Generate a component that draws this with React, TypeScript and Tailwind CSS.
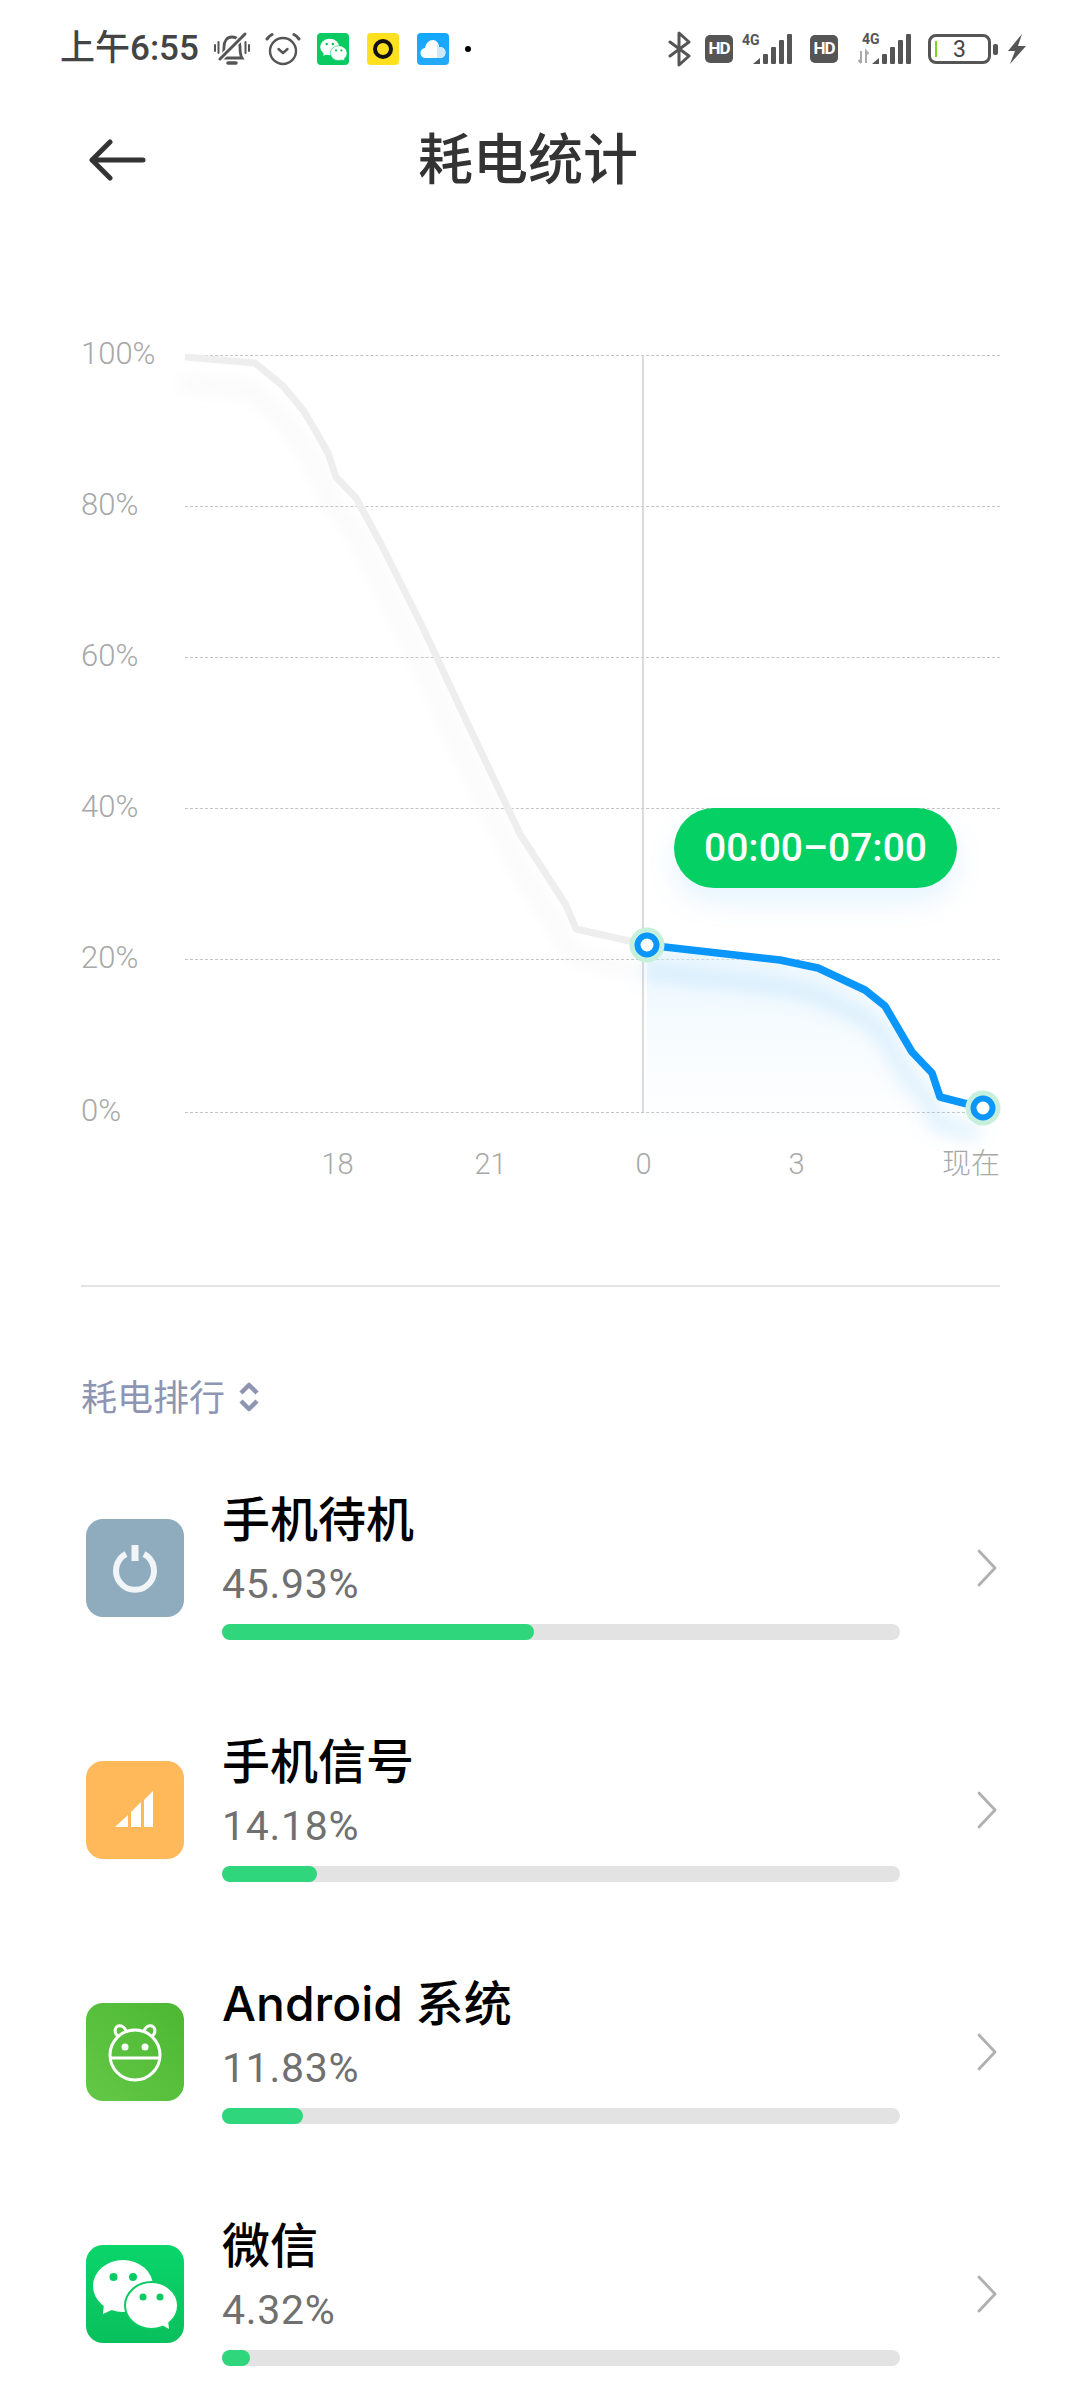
const BLUE_LINE = "647,945 780,960 818,968 865,990 885,1006 912,1052 932,1073 940,1097 983,1108";
const GRAY_LINE =
  "185,357 255,363 283,386 303,410 315,430 328,453 336,477 356,498 380,542 424,630 465,718 520,834 566,905 576,929 647,945";

const BellOff = () => (
  <svg width="36" height="36" viewBox="0 0 36 36" fill="none" stroke="#555" strokeWidth="2.800" strokeLinecap="round">
    <path d="M8 27c2-3 2-7 2-11 0-6 3-10 8-10s8 4 8 10c0 4 0 8 2 11z" />
    <path d="M14 32h8" strokeWidth="3.500" />
    <path d="M6 28 31 3" stroke="#fff" strokeWidth="6" />
    <path d="M6 28 31 3" strokeWidth="3" />
    <path d="M1 14v6M4.500 11v11M31.500 11v11M35 14v6" strokeWidth="2" />
  </svg>
);

const AlarmIcon = () => (
  <svg width="36" height="36" viewBox="0 0 36 36" fill="none" stroke="#555" strokeWidth="2.400" strokeLinecap="round" strokeLinejoin="round">
    <circle cx="18" cy="20" r="13" />
    <path d="m13.500 18 4.500 4 4.500-4" />
    <path d="M2 8c1.500-2 3-3.500 5-4.500M34 8c-1.500-2-3-3.500-5-4.500" strokeWidth="3" />
  </svg>
);

const Bubbles = ({ size }: { size: number }) => (
  <svg width={size} height={size} viewBox="0 0 98 98">
    <ellipse cx="37" cy="41" rx="30" ry="26" fill="#fff" />
    <path d="M18 58 17 69l13-6z" fill="#fff" />
    <ellipse cx="65.500" cy="60.500" rx="26.500" ry="23.500" fill="#fff" stroke="#0acb62" strokeWidth="2" />
    <path d="M76 80 83 84l-1-9z" fill="#fff" />
    <circle cx="27.500" cy="32" r="4" fill="#0acb62" />
    <circle cx="47" cy="32" r="4" fill="#0acb62" />
    <circle cx="57" cy="52" r="3.500" fill="#0acb62" />
    <circle cx="74" cy="52" r="3.500" fill="#0acb62" />
  </svg>
);

const CloudBadge = () => (
  <div className="w-8 h-8 rounded-[4px] bg-gradient-to-b from-[#12a7ff] to-[#25a9f5] flex items-center justify-center">
    <svg width="28" height="22" viewBox="0 0 28 22">
      <path d="M7 20a5 5 0 0 1-1-10c1-5 4-8 8-8 3 0 6 3 6 7h1a5.500 5.500 0 0 1 0 11z" fill="#fff" />
      <path d="M18 6c1 1 2 2 2 3h1a5.500 5.500 0 0 1 0 11h-3z" fill="#cfe9fb" />
    </svg>
  </div>
);

const Bars = () => (
  <g fill="#555">
    <path d="M0 30 7 24v6z" />
    <rect x="10" y="20" width="5" height="10" rx="1" />
    <rect x="18" y="13" width="5" height="17" rx="1" />
    <rect x="26" y="6" width="5" height="24" rx="1" />
    <rect x="34" y="0" width="5" height="30" rx="1" />
  </g>
);

const HdBadge = () => (
  <div className="w-7 h-7 rounded-[5px] bg-[#555] flex items-center justify-center text-white text-[17px] font-bold tracking-[-1px] font-['Roboto',sans-serif]">
    HD
  </div>
);

const StatusBar = () => (
  <div className="h-[98px] relative flex items-center pl-[60px] pr-[53px]">
    <span className="w-[154px] text-[35px] font-medium text-[#444] font-['Roboto','Noto_Sans_CJK_SC',sans-serif] whitespace-nowrap">
      上午6:55
    </span>
    <BellOff />
    <div className="ml-[15px]">
      <AlarmIcon />
    </div>
    <div className="ml-4 w-8 h-8 rounded-[4px] bg-[#0acb62] flex items-center justify-center">
      <Bubbles size={31} />
    </div>
    <div className="ml-[18px] w-8 h-8 rounded-[4px] bg-[#ffe01f] flex items-center justify-center">
      <div className="w-5 h-5 rounded-full border-[4px] border-[#111]" />
    </div>
    <div className="ml-[18px]">
      <CloudBadge />
    </div>
    <div className="ml-4 w-[6px] h-[6px] rounded-full bg-black" />

    <div className="ml-auto flex items-center">
      <svg width="24" height="36" viewBox="0 0 24 36" fill="none" stroke="#555" strokeWidth="3" strokeLinecap="round" strokeLinejoin="round">
        <path d="M2 11 21 25l-10 9V2l10 9L2 25" />
      </svg>
      <div className="ml-[13px]">
        <HdBadge />
      </div>
      <div className="ml-[9px] relative w-[52px] h-[32px]">
        <span className="absolute left-0 -top-[3px] text-[14px] font-bold text-[#555] font-['Roboto',sans-serif]">4G</span>
        <svg width="52" height="32" viewBox="0 0 52 32">
          <g transform="translate(11 1)">
            <Bars />
          </g>
        </svg>
      </div>
      <div className="ml-[16px]">
        <HdBadge />
      </div>
      <div className="ml-[18px] relative w-[56px] h-[32px]">
        <span className="absolute left-[6px] -top-[4px] text-[14px] font-bold text-[#555] font-['Roboto',sans-serif]">4G</span>
        <svg width="56" height="32" viewBox="0 0 56 32">
          <path d="M5 18v12M2.500 27 5 30M10 30V18l2.500 3" stroke="#aaa" strokeWidth="2" fill="none" />
          <g transform="translate(16 1)">
            <Bars />
          </g>
        </svg>
      </div>
      <div className="ml-[16px] w-[63px] h-[30px] rounded-[8px] border-[3px] border-[#555] flex items-center relative">
        <div className="absolute left-[4px] w-[2px] h-[16px] bg-[#7ed321]" />
        <span className="w-full text-center text-[23px] leading-none text-[#444] font-['Roboto',sans-serif]">3</span>
      </div>
      <div className="ml-[2px] w-[5px] h-[11px] rounded-[2px] bg-[#555]" />
      <svg className="ml-[9px]" width="20" height="30" viewBox="0 0 20 30">
        <path d="M15 0 1 17h7l-5 13 16-18h-8z" fill="#555" />
      </svg>
    </div>
  </div>
);

const Header = () => (
  <div className="h-[124px] flex items-center pl-[88px]">
    <svg width="58" height="42" viewBox="0 0 58 42" fill="none" stroke="#333" strokeWidth="5" strokeLinecap="round" strokeLinejoin="round">
      <path d="M22 3 4 21l18 18M4 21h51" />
    </svg>
    <h1 className="ml-[272px] -mt-[9px] text-[55px] font-medium leading-none text-[#333] font-['Noto_Sans_CJK_SC',sans-serif]">
      耗电统计
    </h1>
  </div>
);

const Chart = () => (
  <div className="relative mt-[113px]">
    <div className="flex flex-col gap-[111px] pl-[81px] pr-[80px]">
      {["100%", "80%", "60%", "40%", "20%", "0%"].map((label) => (
        <div key={label} className={label === "0%" ? "flex items-center h-[40px] mt-[2px]" : "flex items-center h-[40px]"}>
          <span className="w-[104px] -mt-[2px] text-[31px] font-light text-[#a8a8a8] font-['Roboto',sans-serif]">{label}</span>
          <div className="flex-1 border-t border-dashed border-[#c4c4c4]" />
        </div>
      ))}
    </div>
    <div className="mt-[11px] h-[40px] flex pl-[261px] pr-[80px] text-[29px] font-light text-[#a8a8a8] font-['Roboto','Noto_Sans_CJK_SC',sans-serif]">
      <span className="w-[153px] text-center">18</span>
      <span className="w-[153px] text-center">21</span>
      <span className="w-[153px] text-center">0</span>
      <span className="w-[153px] text-center">3</span>
      <span className="flex-1 text-right">现在</span>
    </div>

    <svg className="absolute left-0 top-0 w-[1080px] h-[860px]" viewBox="0 335 1080 860" fill="none">
      <defs>
        <linearGradient id="area" x1="0" y1="0" x2="0" y2="1">
          <stop offset="0" stopColor="#d9effd" stopOpacity="0.5" />
          <stop offset="1" stopColor="#eaf6ff" stopOpacity="0" />
        </linearGradient>
        <filter id="soft" x="-20%" y="-20%" width="140%" height="140%">
          <feGaussianBlur stdDeviation="9" />
        </filter>
      </defs>
      <path d="M643 355V1112" stroke="#cfcfcf" strokeWidth="1.500" />
      <polygon points={`${BLUE_LINE} 983,1150 647,1150`} fill="url(#area)" />
      <polyline points={GRAY_LINE} stroke="#e2e2e2" strokeOpacity="0.25" strokeWidth="12" transform="translate(-6 26)" filter="url(#soft)" />
      <polyline points={BLUE_LINE} stroke="#7cc4f5" strokeOpacity="0.3" strokeWidth="12" transform="translate(-4 26)" filter="url(#soft)" />
      <polyline points={GRAY_LINE} stroke="#eeeeee" strokeWidth="7" strokeLinejoin="round" />
      <polyline points={BLUE_LINE} stroke="#0a96fb" strokeWidth="7.500" strokeLinejoin="round" />
      {[
        [647, 945],
        [983, 1108],
      ].map(([cx, cy]) => (
        <g key={cx}>
          <circle cx={cx} cy={cy} r="17.500" fill="#c6f0dc" />
          <circle cx={cx} cy={cy} r="9.500" fill="#fff" stroke="#0a96fb" strokeWidth="6" />
        </g>
      ))}
    </svg>

    <div className="absolute left-[674px] top-[473px] w-[283px] h-[80px] rounded-full bg-[#04d063] flex items-center justify-center text-white text-[39px] font-medium shadow-[0_14px_30px_rgba(10,150,251,0.10)] font-['Roboto',sans-serif]">
      00:00–07:00
    </div>
  </div>
);

const PowerIcon = () => (
  <svg width="50" height="50" viewBox="0 0 50 50" fill="none" stroke="#f2f5f7" strokeWidth="6">
    <path d="M16 11a19 19 0 1 0 18 0" />
    <path d="M25 2v16" strokeWidth="7" />
  </svg>
);

const SignalIcon = () => (
  <svg width="40" height="38" viewBox="0 0 40 38" fill="#fff">
    <path d="M0 36 13 24v12z" />
    <path d="M16 36V21L26 11v25z" />
    <path d="M29 36V9L38 0v36z" />
  </svg>
);

const RobotIcon = () => (
  <svg width="56" height="60" viewBox="0 0 56 60" fill="none" stroke="#fff" strokeWidth="3">
    <path d="M12 15C7 12 7 6 11 4c4-1 7 2 8 5M44 15c5-3 5-9 1-11-4-1-7 2-8 5" />
    <circle cx="28" cy="33" r="25" />
    <path d="M3 36h50" />
    <circle cx="18" cy="25" r="3.500" fill="#fff" stroke="none" />
    <circle cx="38" cy="25" r="3.500" fill="#fff" stroke="none" />
  </svg>
);

const rows = [
  { name: "手机待机", pct: "45.93%", fill: "w-[312px]", icon: <PowerIcon />, bg: "bg-[#8fabbe]" },
  { name: "手机信号", pct: "14.18%", fill: "w-[95px]", icon: <SignalIcon />, bg: "bg-[#ffb95a]" },
  { name: "Android 系统", pct: "11.83%", fill: "w-[81px]", icon: <RobotIcon />, bg: "bg-gradient-to-tr from-[#63c846] to-[#4cb733]" },
  { name: "微信", pct: "4.32%", fill: "w-[28px]", icon: <Bubbles size={98} />, bg: "bg-gradient-to-b from-[#09d56a] to-[#09c05c]" },
];

const UsageList = () => (
  <div className="mt-[70px] flex flex-col gap-[94px] pl-[86px]">
    {rows.map((row) => (
      <div key={row.name} className="flex items-start">
        <div className={`mt-[27px] w-[98px] h-[98px] rounded-[17px] flex items-center justify-center ${row.bg}`}>{row.icon}</div>
        <div className="ml-[38px] w-[678px]">
          <div className="h-[56px] text-[48px] leading-[56px] font-medium text-black whitespace-nowrap font-['Inter','Noto_Sans_CJK_SC',sans-serif]">
            {row.name}
          </div>
          <div className="mt-[12px] h-[48px] text-[41px] leading-[48px] tracking-[0.7px] text-[#707070] font-['Roboto',sans-serif]">{row.pct}</div>
          <div className="mt-[16px] h-4 rounded-full bg-[#e3e3e3]">
            <div className={`h-4 rounded-full bg-[#2fd67c] ${row.fill}`} />
          </div>
        </div>
        <svg className="ml-[76px] mt-[56px]" width="22" height="40" viewBox="0 0 22 40" fill="none" stroke="#b0b0b0" strokeWidth="2.800" strokeLinecap="round" strokeLinejoin="round">
          <path d="m3 3 16 17L3 37" />
        </svg>
      </div>
    ))}
  </div>
);

export default function App() {
  return (
    <div className="w-[1080px] h-[2400px] overflow-hidden bg-white">
      <StatusBar />
      <Header />
      <Chart />
      <div className="mt-[102px] ml-[81px] mr-[80px] h-[2px] bg-[#e3e3e3]" />
      <div className="mt-[84px] ml-[81px] h-[48px] flex items-center">
        <span className="text-[36px] leading-none text-[#8d95b3] font-['Noto_Sans_CJK_SC',sans-serif]">耗电排行</span>
        <svg className="ml-[13px] mt-[3px]" width="22" height="30" viewBox="0 0 22 30" fill="none" stroke="#8d95b3" strokeWidth="4.500" strokeLinejoin="round">
          <path d="m3 11 8-8 8 8M3 19l8 8 8-8" />
        </svg>
      </div>
      <div className="pt-[3px]">
        <UsageList />
      </div>
    </div>
  );
}
